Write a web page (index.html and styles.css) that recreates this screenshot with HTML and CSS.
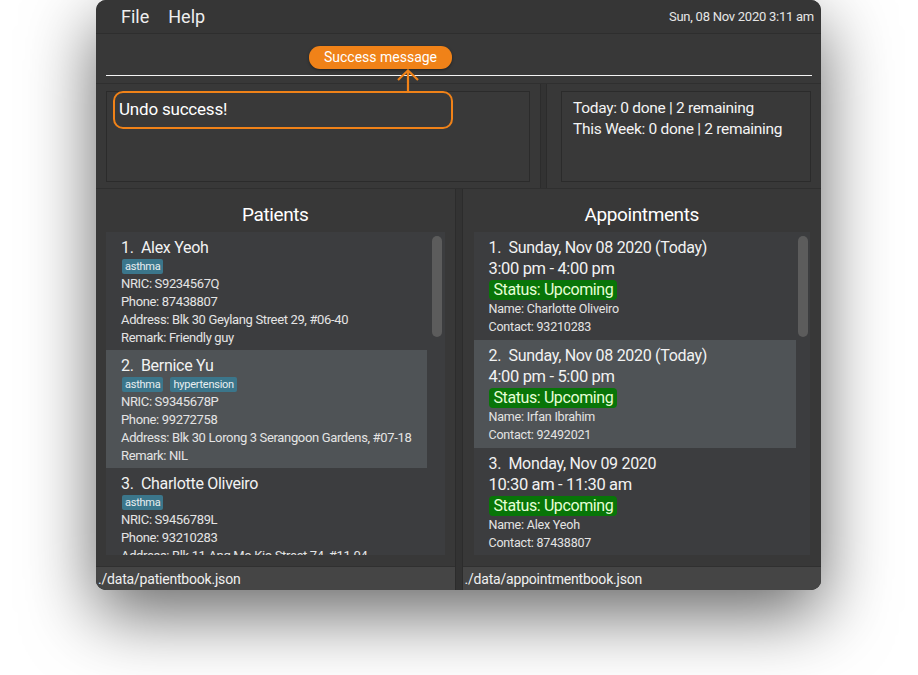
FILE: index.html
```html
<!DOCTYPE html>
<html>
<head>
<meta charset="utf-8">
<link rel="stylesheet" href="styles.css">
</head>
<body>
<div class="window">
  <div class="menubar">
    <div class="menus"><span class="menu">File</span><span class="menu">Help</span></div>
    <div class="clock">Sun, 08 Nov 2020 3:11 am</div>
  </div>
  <div class="command">
    <div class="cmdline"></div>
  </div>
  <div class="results">
    <div class="res-left">
      <div class="res-box"><div class="res-text">Undo success!</div></div>
    </div>
    <div class="res-divider"></div>
    <div class="res-right">
      <div class="res-box stats">
        <div>Today: 0 done | 2 remaining</div>
        <div>This Week: 0 done | 2 remaining</div>
      </div>
    </div>
  </div>
  <div class="panes">
    <div class="pane">
      <div class="pane-title">Patients</div>
      <div class="list">
        <div class="card">
          <div class="name">1.&nbsp; Alex Yeoh</div>
          <div class="tags"><span class="tag">asthma</span></div>
          <div class="line">NRIC: S9234567Q</div>
          <div class="line">Phone: 87438807</div>
          <div class="line">Address: Blk 30 Geylang Street 29, #06-40</div>
          <div class="line">Remark: Friendly guy</div>
        </div>
        <div class="card selected">
          <div class="name">2.&nbsp; Bernice Yu</div>
          <div class="tags"><span class="tag">asthma</span><span class="tag">hypertension</span></div>
          <div class="line">NRIC: S9345678P</div>
          <div class="line">Phone: 99272758</div>
          <div class="line">Address: Blk 30 Lorong 3 Serangoon Gardens, #07-18</div>
          <div class="line">Remark: NIL</div>
        </div>
        <div class="card">
          <div class="name">3.&nbsp; Charlotte Oliveiro</div>
          <div class="tags"><span class="tag">asthma</span></div>
          <div class="line">NRIC: S9456789L</div>
          <div class="line">Phone: 93210283</div>
          <div class="line">Address: Blk 11 Ang Mo Kio Street 74, #11-04</div>
        </div>
        <div class="scrollbar left-sb"></div>
      </div>
      <div class="status">./data/patientbook.json</div>
    </div>
    <div class="pane-divider"></div>
    <div class="pane">
      <div class="pane-title">Appointments</div>
      <div class="list appts">
        <div class="card appt">
          <div class="name">1.&nbsp; Sunday, Nov 08 2020 (Today)</div>
          <div class="time">3:00 pm - 4:00 pm</div>
          <div><span class="pill">Status: Upcoming</span></div>
          <div class="aline">Name: Charlotte Oliveiro</div>
          <div class="aline">Contact: 93210283</div>
        </div>
        <div class="card appt selected">
          <div class="name">2.&nbsp; Sunday, Nov 08 2020 (Today)</div>
          <div class="time">4:00 pm - 5:00 pm</div>
          <div><span class="pill">Status: Upcoming</span></div>
          <div class="aline">Name: Irfan Ibrahim</div>
          <div class="aline">Contact: 92492021</div>
        </div>
        <div class="card appt">
          <div class="name">3.&nbsp; Monday, Nov 09 2020</div>
          <div class="time">10:30 am - 11:30 am</div>
          <div><span class="pill">Status: Upcoming</span></div>
          <div class="aline">Name: Alex Yeoh</div>
          <div class="aline">Contact: 87438807</div>
        </div>
        <div class="scrollbar right-sb"></div>
      </div>
      <div class="status">./data/appointmentbook.json</div>
    </div>
  </div>

  <div class="annot-pill">Success message</div>
  <svg class="annot-arrow" width="26" height="24" viewBox="0 0 26 24">
    <path d="M13 1.5 V24 M3 11 L13 1.5 L23 11" fill="none" stroke="#f08218" stroke-width="2.2"/>
  </svg>
  <div class="annot-box"></div>
</div>
</body>
</html>
```

FILE: styles.css
```css
html, body {
  margin: 0;
  padding: 0;
  background: #ffffff;
}
body {
  width: 918px;
  height: 675px;
  overflow: hidden;
  font-family: Roboto, "Liberation Sans", sans-serif;
  color: #ffffff;
}
.window {
  position: relative;
  margin-left: 96px;
  width: 725px;
  height: 590px;
  border-radius: 10px;
  overflow: hidden;
  background: #383838;
  box-shadow: 0 24px 70px rgba(0, 0, 0, 0.6);
  display: flex;
  flex-direction: column;
}
.menubar {
  height: 33px;
  flex: none;
  background: #363636;
  border-bottom: 1px solid #2e2e2e;
  display: flex;
  align-items: center;
  justify-content: space-between;
  padding: 0 7px 0 25px;
}
.menus {
  display: flex;
  gap: 19px;
  font-size: 18px;
  color: #eeeeee;
}
.clock {
  font-size: 13px;
  color: #e6e6e6;
  letter-spacing: -0.25px;
}
.command {
  height: 49px;
  flex: none;
  background: #383838;
  border-bottom: 1px solid #2f2f2f;
  padding: 0 9px 0 10px;
  display: flex;
  flex-direction: column;
  justify-content: flex-end;
}
.cmdline {
  height: 1px;
  background: #f4f4f4;
  margin-bottom: 7px;
}
.results {
  height: 104px;
  flex: none;
  display: flex;
  background: #383838;
  border-bottom: 1px solid #2f2f2f;
}
.res-left {
  width: 444px;
  flex: none;
  box-sizing: border-box;
  padding: 7px 10px 6px 10px;
  display: flex;
}
.res-divider {
  width: 5px;
  flex: none;
  background: #333333;
  border-left: 1px solid #2c2c2c;
  border-right: 1px solid #2c2c2c;
}
.res-right {
  flex: 1;
  padding: 7px 10px 6px 14px;
  display: flex;
}
.res-box {
  flex: 1;
  border: 1px solid #2b2b2b;
  background: #393939;
  box-sizing: border-box;
}
.res-text {
  font-size: 17px;
  padding: 7px 0 0 12px;
  color: #ffffff;
  letter-spacing: -0.2px;
}
.stats {
  padding: 6px 0 0 11px;
  font-size: 15.5px;
  line-height: 21px;
  color: #f4f4f4;
  letter-spacing: -0.3px;
}
.panes {
  flex: 1;
  display: flex;
  min-height: 0;
}
.pane {
  flex: 1;
  display: flex;
  flex-direction: column;
  background: #383838;
  min-width: 0;
}
.pane-divider {
  width: 6px;
  flex: none;
  background: #333333;
  border-left: 1px solid #2c2c2c;
  border-right: 1px solid #2c2c2c;
}
.pane-title {
  height: 43px;
  flex: none;
  display: flex;
  align-items: center;
  justify-content: center;
  font-size: 19px;
  padding-top: 8px;
  box-sizing: border-box;
  letter-spacing: -0.4px;
}
.list {
  position: relative;
  height: 323px;
  flex: none;
  margin: 0 10px 0 10px;
  background: #3c3d3f;
  overflow: hidden;
}
.card {
  width: 321px;
  background: #3c3d3f;
  padding: 6px 0 0 15px;
  box-sizing: border-box;
  height: 118px;
}
.card.selected {
  background: #4f5356;
}
.name {
  font-size: 16px;
  line-height: 20px;
  color: #f2f2f2;
  letter-spacing: -0.3px;
}
.tags {
  display: flex;
  gap: 7px;
  margin: 1px 0 1px 1px;
}
.tag {
  font-size: 11px;
  line-height: 15px;
  padding: 0 3px;
  background: #3b768b;
  color: #e8eef0;
  border-radius: 2px;
  letter-spacing: -0.25px;
}
.line {
  font-size: 13px;
  line-height: 18px;
  color: #e4e4e4;
  letter-spacing: -0.35px;
}
.scrollbar {
  position: absolute;
  width: 10px;
  border-radius: 5px;
  background: #5c5c5c;
}
.left-sb {
  right: 3px;
  top: 4px;
  height: 101px;
}
.appts {
  margin: 0 11px 0 11px;
}
.appts .card {
  width: 322px;
  height: 108px;
}
.right-sb {
  right: 2px;
  top: 4px;
  height: 101px;
}
.time {
  font-size: 16.5px;
  line-height: 22px;
  color: #f2f2f2;
  letter-spacing: -0.35px;
}
.pill {
  display: inline-block;
  font-size: 16px;
  line-height: 20px;
  padding: 0 4px 0 5px;
  background: #087508;
  color: #e6ffd6;
  border-radius: 4px;
  letter-spacing: -0.4px;
}
.aline {
  font-size: 12.5px;
  line-height: 18px;
  color: #e4e4e4;
  letter-spacing: -0.2px;
}
.status {
  margin-top: 11px;
  height: 24px;
  flex: none;
  background: #454545;
  border-top: 1px solid #303030;
  font-size: 14px;
  line-height: 24px;
  padding-left: 2px;
  color: #f0f0f0;
  letter-spacing: -0.2px;
}
.annot-pill {
  position: absolute;
  left: 213px;
  top: 46px;
  width: 143px;
  height: 23px;
  border-radius: 11px;
  background: #f08218;
  color: #ffffff;
  font-size: 14px;
  line-height: 23px;
  text-align: center;
  box-shadow: 0 1px 3px rgba(0, 0, 0, 0.4);
}
.annot-arrow {
  position: absolute;
  left: 299px;
  top: 69px;
}
.annot-box {
  position: absolute;
  left: 17px;
  top: 91px;
  width: 340px;
  height: 38px;
  box-sizing: border-box;
  border: 2.5px solid #f08218;
  border-radius: 10px;
}
```
